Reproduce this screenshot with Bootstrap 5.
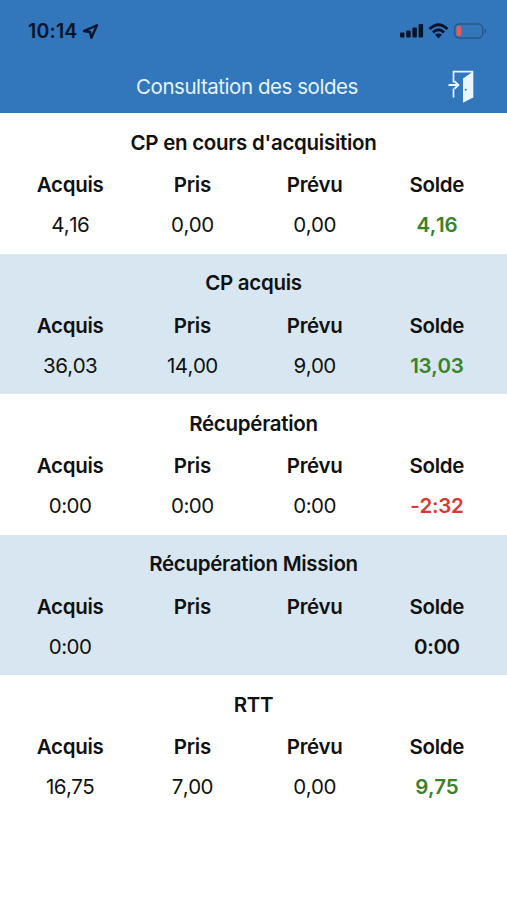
<!DOCTYPE html>
<html lang="fr">
<head>
<meta charset="utf-8">
<meta name="viewport" content="width=device-width, initial-scale=1">
<title>Consultation des soldes</title>
<link href="https://cdn.jsdelivr.net/npm/bootstrap@5.3.0/dist/css/bootstrap.min.css" rel="stylesheet">
<style>
body { font-family: Inter, "Liberation Sans", sans-serif; font-size: 20.5px; color: #111; letter-spacing: -.28px; }
.app-header { height: 113px; background: #3276bc; }
.status-bar { height: 61px; padding: 1px 20px 0 28px; color: #06142b; }
.clock { font-size: 19.5px; letter-spacing: .2px; padding-top: 1px; }
.title-bar { height: 52px; color: #e4f3fd; display: grid; grid-template-columns: 47px 1fr 60px; letter-spacing: -.45px; }
.balance { height: 140.5px; padding: 9px 9px 0; }
.balance:nth-child(even) { background: #d7e6f0; }
.balance h2 { font-size: 20.5px; line-height: 40px; }
.balance:nth-child(odd) h2 { line-height: 41px; margin-bottom: -1px !important; }
.balance .row { line-height: 40px; }
.heads { margin-top: 3px; }
.amounts { font-kerning: none; letter-spacing: -.55px; }
.amounts .fw-semibold { letter-spacing: -.3px; }
.positive { color: #3a8228; }
.negative { color: #d83a30; }
</style>
</head>
<body class="bg-white overflow-hidden">
<header class="app-header">
  <div class="status-bar d-flex align-items-center justify-content-between">
    <div class="d-flex align-items-center gap-1">
      <span class="clock fw-semibold">10:14</span>
      <svg width="17" height="17" viewBox="0 0 17 17" fill="none" stroke="currentColor" stroke-width="2.300" stroke-linejoin="round"><path d="M15 2.200 2 8l6 1 1.400 5.800z"/></svg>
    </div>
    <div class="d-flex align-items-center">
      <svg width="24" height="16" viewBox="0 0 24 16" fill="currentColor"><rect x="0" y="9.5" width="4.500" height="5" rx="1"/><rect x="6.200" y="7.500" width="4.500" height="7" rx="1"/><rect x="12.400" y="4.500" width="4.500" height="10" rx="1"/><rect x="18.600" y="1" width="4.500" height="13.500" rx="1"/></svg>
      <svg class="ms-1" width="21" height="16" viewBox="0 0 21 16" fill="none" stroke="currentColor" stroke-width="2.700"><path d="M1.500 6Q10.500-2.500 19.500 6M5 9.500Q10.500 4 16 9.500"/><path d="m7 11.800Q10.500 9 14 11.800L10.500 15.300z" fill="currentColor" stroke="none"/></svg>
      <svg class="ms-1" width="34" height="17" viewBox="0 0 34 17"><rect x="1.700" y="1" width="28" height="14" rx="4.500" fill="none" stroke="#285684" stroke-width="1.300"/><rect x="3.500" y="2.700" width="4.800" height="10.600" rx="2" fill="#df5e5b"/><path d="M31.500 5.500c2.300.8 2.300 4.200 0 5z" fill="#285684"/></svg>
    </div>
  </div>
  <div class="title-bar align-items-center text-center">
    <span></span>
    <span>Consultation des soldes</span>
    <svg width="27" height="34" viewBox="0 0 27 34" fill="none" stroke="#eaf6ff"><path d="M6.500 12.500V1.700H25.300v26M6.500 18.500v9" stroke-width="1.700"/><path d="M1.500 15h9M7.500 11.200l3.800 3.800-3.800 3.800" stroke-width="2"/><path fill-rule="evenodd" fill="#eaf6ff" stroke="none" d="M16 8.500 26.200 1.500v26L16 32.800zm2.700 10.300a1 1 0 1 0 0 2 1 1 0 0 0 0-2z"/></svg>
  </div>
</header>
<main class="text-center">
  <section class="balance">
    <h2 class="fw-semibold m-0">CP en cours d'acquisition</h2>
    <div class="row g-0 heads fw-semibold"><div class="col">Acquis</div><div class="col">Pris</div><div class="col">Prévu</div><div class="col">Solde</div></div>
    <div class="row g-0 amounts"><div class="col">4,16</div><div class="col">0,00</div><div class="col">0,00</div><div class="col fw-semibold positive">4,16</div></div>
  </section>
  <section class="balance">
    <h2 class="fw-semibold m-0">CP acquis</h2>
    <div class="row g-0 heads fw-semibold"><div class="col">Acquis</div><div class="col">Pris</div><div class="col">Prévu</div><div class="col">Solde</div></div>
    <div class="row g-0 amounts"><div class="col">36,03</div><div class="col">14,00</div><div class="col">9,00</div><div class="col fw-semibold positive">13,03</div></div>
  </section>
  <section class="balance">
    <h2 class="fw-semibold m-0">Récupération</h2>
    <div class="row g-0 heads fw-semibold"><div class="col">Acquis</div><div class="col">Pris</div><div class="col">Prévu</div><div class="col">Solde</div></div>
    <div class="row g-0 amounts"><div class="col">0:00</div><div class="col">0:00</div><div class="col">0:00</div><div class="col fw-semibold negative">-2:32</div></div>
  </section>
  <section class="balance">
    <h2 class="fw-semibold m-0">Récupération Mission</h2>
    <div class="row g-0 heads fw-semibold"><div class="col">Acquis</div><div class="col">Pris</div><div class="col">Prévu</div><div class="col">Solde</div></div>
    <div class="row g-0 amounts"><div class="col">0:00</div><div class="col"></div><div class="col"></div><div class="col fw-semibold">0:00</div></div>
  </section>
  <section class="balance">
    <h2 class="fw-semibold m-0">RTT</h2>
    <div class="row g-0 heads fw-semibold"><div class="col">Acquis</div><div class="col">Pris</div><div class="col">Prévu</div><div class="col">Solde</div></div>
    <div class="row g-0 amounts"><div class="col">16,75</div><div class="col">7,00</div><div class="col">0,00</div><div class="col fw-semibold positive">9,75</div></div>
  </section>
</main>
<script src="https://cdn.jsdelivr.net/npm/bootstrap@5.3.0/dist/js/bootstrap.bundle.min.js"></script>
</body>
</html>
